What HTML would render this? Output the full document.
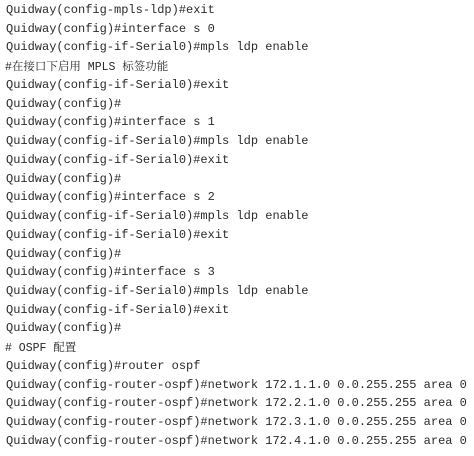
<!DOCTYPE html>
<html><head><meta charset="utf-8"><style>
html,body{margin:0;padding:0;background:#fff;width:474px;height:456px;overflow:hidden}
#w{position:absolute;left:6px;top:1px;font-family:"Liberation Mono",monospace;font-size:12px;color:#2a2a2a}
#w div{height:18.74px;line-height:18.74px;white-space:pre;overflow:visible}
#w .c{margin-left:-1px;font-family:"Liberation Mono","Noto Serif CJK SC",monospace;font-size:11.5px;position:relative;top:2px}
</style></head><body><div id="w">
<div>Quidway(config-mpls-ldp)#exit</div>
<div>Quidway(config)#interface s 0</div>
<div>Quidway(config-if-Serial0)#mpls ldp enable</div>
<div class="c">#在接口下启用 MPLS 标签功能</div>
<div>Quidway(config-if-Serial0)#exit</div>
<div>Quidway(config)#</div>
<div>Quidway(config)#interface s 1</div>
<div>Quidway(config-if-Serial0)#mpls ldp enable</div>
<div>Quidway(config-if-Serial0)#exit</div>
<div>Quidway(config)#</div>
<div>Quidway(config)#interface s 2</div>
<div>Quidway(config-if-Serial0)#mpls ldp enable</div>
<div>Quidway(config-if-Serial0)#exit</div>
<div>Quidway(config)#</div>
<div>Quidway(config)#interface s 3</div>
<div>Quidway(config-if-Serial0)#mpls ldp enable</div>
<div>Quidway(config-if-Serial0)#exit</div>
<div>Quidway(config)#</div>
<div class="c"># OSPF 配置</div>
<div>Quidway(config)#router ospf</div>
<div>Quidway(config-router-ospf)#network 172.1.1.0 0.0.255.255 area 0</div>
<div>Quidway(config-router-ospf)#network 172.2.1.0 0.0.255.255 area 0</div>
<div>Quidway(config-router-ospf)#network 172.3.1.0 0.0.255.255 area 0</div>
<div>Quidway(config-router-ospf)#network 172.4.1.0 0.0.255.255 area 0</div>
</div></body></html>
